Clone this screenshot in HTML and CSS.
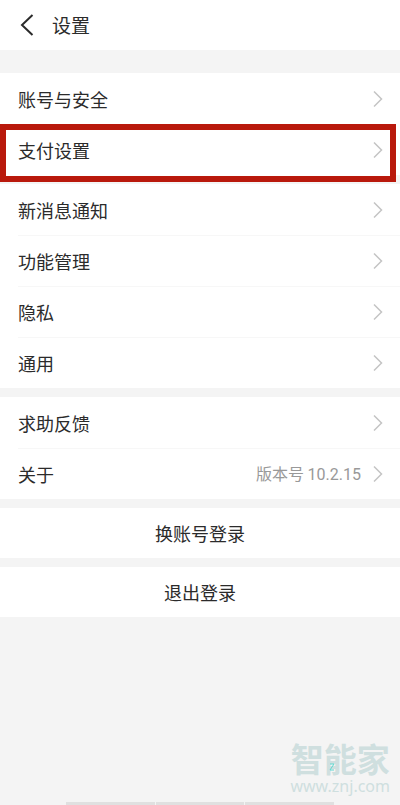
FILE: index.html
```html
<!DOCTYPE html>
<html lang="zh-CN">
<head>
<meta charset="utf-8">
<meta name="viewport" content="width=device-width, initial-scale=1">
<title>设置</title>
<link rel="stylesheet" href="styles.css">
</head>
<body>
<svg class="defs" aria-hidden="true">
  <symbol id="chevron" viewBox="0 0 10 18"><path d="M1 1.5 8.5 9 1 16.5"/></symbol>
</svg>
<header class="topbar">
  <button class="back" type="button" aria-label="返回">
    <svg viewBox="0 0 14 22"><path d="M12.500 1 2 11l10.500 10"/></svg>
  </button>
  <h1 class="title">设置</h1>
</header>
<main class="settings">
  <nav class="group">
    <a class="row" href="#account"><span class="label">账号与安全</span><svg class="chevron"><use href="#chevron"/></svg></a>
    <a class="row highlighted" href="#payment"><span class="label">支付设置</span><svg class="chevron"><use href="#chevron"/></svg></a>
  </nav>
  <nav class="group">
    <a class="row" href="#notifications"><span class="label">新消息通知</span><svg class="chevron"><use href="#chevron"/></svg></a>
    <a class="row" href="#features"><span class="label">功能管理</span><svg class="chevron"><use href="#chevron"/></svg></a>
    <a class="row" href="#privacy"><span class="label">隐私</span><svg class="chevron"><use href="#chevron"/></svg></a>
    <a class="row" href="#general"><span class="label">通用</span><svg class="chevron"><use href="#chevron"/></svg></a>
  </nav>
  <nav class="group">
    <a class="row" href="#feedback"><span class="label">求助反馈</span><svg class="chevron"><use href="#chevron"/></svg></a>
    <a class="row" href="#about"><span class="label">关于</span><span class="value">版本号 <span class="number">10.2.15</span></span><svg class="chevron"><use href="#chevron"/></svg></a>
  </nav>
  <button class="action" type="button">换账号登录</button>
  <button class="action" type="button">退出登录</button>
</main>
<footer class="footer">
  <div class="watermark">
    <span class="brand">智能家</span>
    <svg class="mark" viewBox="0 0 6 8"><path d="M1 1h4L1 7h4"/></svg>
    <span class="site">www.znj.com</span>
  </div>
  <div class="navbar"><i></i><i></i><i></i></div>
</footer>
</body>
</html>
```
FILE: styles.css
```css
* {
  box-sizing: border-box;
}

body {
  display: flex;
  flex-direction: column;
  min-height: 100vh;
  margin: 0;
  background: #f4f4f4;
  color: #2b2b2b;
  font-family: "Noto Sans CJK SC", sans-serif;
  font-size: 18px;
  line-height: 24px;
}

.defs {
  position: absolute;
  width: 0;
  height: 0;
}

svg {
  fill: none;
  stroke: currentColor;
}

button {
  border: 0;
  padding: 0;
  color: inherit;
  font: inherit;
}

.topbar {
  display: flex;
  align-items: center;
  gap: 18px;
  height: 50px;
  padding: 0 20px;
  background: #fff;
}

.back {
  display: flex;
  background: none;
}

.back svg {
  width: 14px;
  height: 22px;
  stroke-width: 2;
}

.title {
  margin: 0;
  font-size: 19px;
  font-weight: 400;
}

.settings {
  display: flex;
  flex-direction: column;
  gap: 9px;
  padding-top: 23px;
}

.group {
  background: #fff;
}

.row {
  position: relative;
  display: flex;
  align-items: center;
  gap: 12px;
  height: 51px;
  padding: 0 17px 0 18px;
  color: inherit;
  text-decoration: none;
}

.row + .row::after {
  content: "";
  position: absolute;
  top: 0;
  left: 18px;
  right: 0;
  border-top: 1px solid #f7f7f7;
}

.label {
  flex: 1;
}

.value {
  color: #999;
  font-size: 16px;
}

.number {
  font-family: Roboto, sans-serif;
}

.chevron {
  width: 10px;
  height: 18px;
  color: #c4c4c4;
  stroke-width: 1.5;
}

.highlighted {
  z-index: 1;
}

.highlighted::before {
  content: "";
  position: absolute;
  z-index: -1;
  top: 0;
  right: 4px;
  bottom: -7px;
  left: 0;
  border: 6px solid #b9190c;
  background: #fff;
}

.row.highlighted::after {
  display: none;
}

.action {
  height: 50px;
  background: #fff;
}

.footer {
  display: flex;
  flex-direction: column;
  gap: 6px;
  margin-top: auto;
}

.watermark {
  position: relative;
  display: flex;
  flex-direction: column;
  align-self: flex-end;
  align-items: center;
  margin-right: 10px;
  color: #cfdfdf;
}

.brand {
  font-size: 33px;
  font-weight: 600;
  line-height: 36px;
}

.mark {
  position: absolute;
  top: 23px;
  left: 39px;
  width: 6px;
  height: 8px;
  color: #5fd8cf;
}

.site {
  font-family: "Noto Sans", sans-serif;
  font-size: 16px;
  line-height: 20px;
}

.navbar {
  display: flex;
  align-self: center;
  gap: 1px;
  width: 67%;
}

.navbar i {
  flex: 1;
  height: 3px;
  background: #e0e0e0;
}
```
